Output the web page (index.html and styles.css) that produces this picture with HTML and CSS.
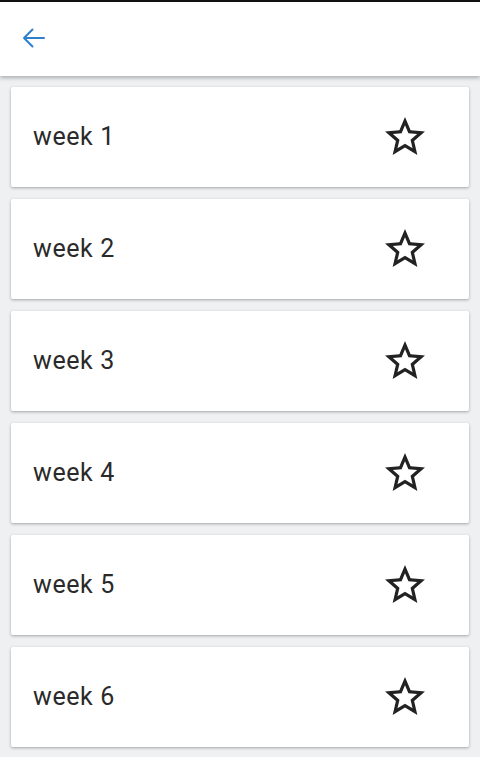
FILE: index.html
```html
<!DOCTYPE html>
<html>
<head>
<meta charset="utf-8">
<link rel="stylesheet" href="styles.css">
</head>
<body>
<div class="topline"></div>
<header class="toolbar">
  <button class="back" aria-label="Back">
    <svg width="28" height="28" viewBox="0 0 28 28"><path d="M25 14H5M13.5 5.5L5 14l8.5 8.5" fill="none" stroke="#2f7fcf" stroke-width="2" stroke-linecap="round" stroke-linejoin="round"/></svg>
  </button>
</header>
<main class="list">
  <div class="card"><span class="label">week 1</span><svg class="star" viewBox="0 0 24 24"><path d="M22 9.24l-7.19-.62L12 2 9.19 8.63 2 9.24l5.46 4.73L5.82 21 12 17.270 18.18 21l-1.63-7.03L22 9.24zM12 15.4l-3.76 2.27 1-4.28-3.32-2.88 4.38-.38L12 6.1l1.71 4.04 4.38.38-3.32 2.88 1 4.28L12 15.4z" fill="#222"/></svg></div>
  <div class="card"><span class="label">week 2</span><svg class="star" viewBox="0 0 24 24"><path d="M22 9.24l-7.19-.62L12 2 9.19 8.63 2 9.24l5.46 4.73L5.82 21 12 17.27 18.18 21l-1.63-7.03L22 9.24zM12 15.4l-3.76 2.27 1-4.28-3.32-2.88 4.38-.38L12 6.1l1.71 4.04 4.38.38-3.32 2.88 1 4.28L12 15.4z" fill="#222"/></svg></div>
  <div class="card"><span class="label">week 3</span><svg class="star" viewBox="0 0 24 24"><path d="M22 9.24l-7.19-.62L12 2 9.19 8.63 2 9.24l5.46 4.73L5.82 21 12 17.27 18.18 21l-1.63-7.03L22 9.24zM12 15.4l-3.76 2.27 1-4.28-3.32-2.88 4.38-.38L12 6.1l1.71 4.04 4.38.38-3.32 2.88 1 4.28L12 15.4z" fill="#222"/></svg></div>
  <div class="card"><span class="label">week 4</span><svg class="star" viewBox="0 0 24 24"><path d="M22 9.24l-7.19-.62L12 2 9.19 8.63 2 9.24l5.46 4.73L5.82 21 12 17.27 18.18 21l-1.63-7.03L22 9.24zM12 15.4l-3.76 2.27 1-4.28-3.32-2.88 4.38-.38L12 6.1l1.71 4.04 4.38.38-3.32 2.88 1 4.28L12 15.4z" fill="#222"/></svg></div>
  <div class="card"><span class="label">week 5</span><svg class="star" viewBox="0 0 24 24"><path d="M22 9.24l-7.19-.62L12 2 9.19 8.63 2 9.24l5.46 4.73L5.82 21 12 17.27 18.18 21l-1.63-7.03L22 9.24zM12 15.4l-3.76 2.27 1-4.28-3.32-2.88 4.38-.38L12 6.1l1.71 4.04 4.38.38-3.32 2.88 1 4.28L12 15.4z" fill="#222"/></svg></div>
  <div class="card"><span class="label">week 6</span><svg class="star" viewBox="0 0 24 24"><path d="M22 9.24l-7.19-.62L12 2 9.19 8.63 2 9.24l5.46 4.73L5.82 21 12 17.27 18.18 21l-1.63-7.03L22 9.24zM12 15.4l-3.76 2.27 1-4.28-3.32-2.88 4.38-.38L12 6.1l1.71 4.04 4.38.38-3.32 2.88 1 4.28L12 15.4z" fill="#222"/></svg></div>
</main>
</body>
</html>
```
FILE: styles.css
```css
html, body {
  margin: 0;
  padding: 0;
}
body {
  background: #eef0f2;
  font-family: Roboto, "Noto Sans", sans-serif;
  height: 757px;
  overflow: hidden;
}
.topline {
  height: 2px;
  background: #111;
}
.toolbar {
  position: relative;
  z-index: 1;
  height: 74px;
  background: #fff;
  box-shadow: 0 2px 4px rgba(0, 0, 0, 0.28);
  display: flex;
  align-items: center;
  padding-left: 19px;
}
.back {
  border: 0;
  background: none;
  padding: 0;
  width: 28px;
  height: 28px;
  display: flex;
  margin-top: -2px;
}
.list {
  display: flex;
  flex-direction: column;
  gap: 12px;
  padding: 11px 11px 0 11px;
}
.card {
  height: 100px;
  background: #fff;
  box-shadow: 0 1px 3px rgba(0, 0, 0, 0.32);
  border-radius: 2px;
  display: flex;
  align-items: center;
  justify-content: space-between;
  padding: 0 40px 0 22px;
}
.label {
  font-size: 25px;
  letter-spacing: 0.6px;
  color: #2a2a2a;
  margin-top: -2px;
}
.star {
  width: 48px;
  height: 48px;
}
```
